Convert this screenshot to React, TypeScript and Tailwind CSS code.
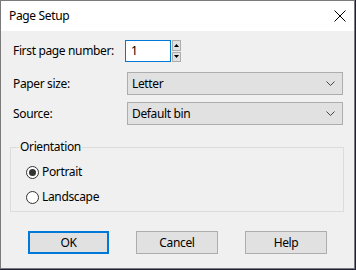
import React from "react";

const Chevron = () => (
  <svg width="9" height="5" viewBox="0 0 9 5" className="text-[#444]">
    <path d="M0.5 0.5 L4.5 4.5 L8.5 0.5" fill="none" stroke="currentColor" strokeWidth="1" />
  </svg>
);

const Select = ({ value }: { value: string }) => (
  <div className="flex h-[23px] w-[216px] items-center justify-between border border-[#adadad] bg-[#e1e1e1] pl-[4px] pr-[7px]">
    <span>{value}</span>
    <Chevron />
  </div>
);

const Radio = ({ checked, label }: { checked?: boolean; label: string }) => (
  <div className="flex h-[18px] items-center gap-[3px]">
    <div className="flex h-[13px] w-[13px] items-center justify-center rounded-full border border-[#333] bg-white">
      {checked && <div className="h-[7px] w-[7px] rounded-full bg-[#333]" />}
    </div>
    <span>{label}</span>
  </div>
);

const Button = ({ label, primary }: { label: string; primary?: boolean }) => (
  <div
    className={
      primary
        ? "flex h-[23px] w-[81px] items-center justify-center border-2 border-[#0078d7] bg-[#e1e1e1]"
        : "flex h-[23px] w-[82px] items-center justify-center border border-[#adadad] bg-[#e1e1e1]"
    }
  >
    {label}
  </div>
);

export default function App() {
  return (
    <div className="h-[270px] w-[356px] bg-[#20203a]" style={{ fontFamily: '"Noto Sans", "Liberation Sans", sans-serif' }}>
      <div className="flex h-[269px] w-[355px] flex-col border border-[#7a7a7a] text-[12px] tracking-[-0.35px] text-black">
        <div className="flex h-[30px] items-center justify-between bg-white pl-[8px] pr-[8px]">
          <span>Page Setup</span>
          <svg width="12" height="12" viewBox="0 0 12 12">
            <path d="M0.5 0.5 L11.5 11.5 M11.5 0.5 L0.5 11.5" stroke="#000" strokeWidth="1" />
          </svg>
        </div>
        <div className="flex flex-1 flex-col bg-[#f0f0f0] pl-[12px] pt-[9px]">
          <div className="flex h-[22px] items-center">
            <span className="w-[112px]">First page number:</span>
            <div className="flex h-[22px] w-[46px] items-center border border-[#0078d7] bg-white pl-[5px]">1</div>
            <div className="ml-[1px] flex h-[22px] w-[9px] flex-col gap-[1px]">
              <div className="flex flex-1 items-center justify-center border border-[#adadad] bg-[#e1e1e1]">
                <svg width="5" height="3" viewBox="0 0 5 3"><path d="M2.5 0 L5 3 L0 3 Z" fill="#000" /></svg>
              </div>
              <div className="flex flex-1 items-center justify-center border border-[#adadad] bg-[#e1e1e1]">
                <svg width="5" height="3" viewBox="0 0 5 3"><path d="M0 0 L5 0 L2.5 3 Z" fill="#000" /></svg>
              </div>
            </div>
          </div>
          <div className="mt-[10px] flex items-center">
            <span className="w-[114px]">Paper size:</span>
            <Select value="Letter" />
          </div>
          <div className="mt-[7px] flex items-center">
            <span className="w-[114px]">Source:</span>
            <Select value="Default bin" />
          </div>
          <div className="relative ml-[-3px] mt-[22px] flex h-[65px] w-[334px] flex-col gap-[7px] border border-[#dcdcdc] pl-[15px] pt-[15px]">
            <span className="absolute left-[8px] top-[-9px] bg-[#f0f0f0] px-[1px] leading-[16px]">Orientation</span>
            <Radio checked label="Portrait" />
            <Radio label="Landscape" />
          </div>
          <div className="mt-[19px] flex gap-[27px] pl-[15px]">
            <Button primary label="OK" />
            <Button label="Cancel" />
            <Button label="Help" />
          </div>
        </div>
      </div>
    </div>
  );
}
